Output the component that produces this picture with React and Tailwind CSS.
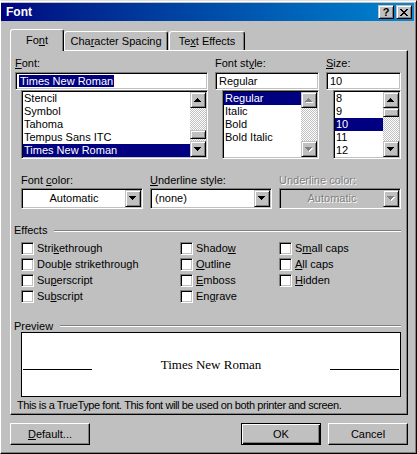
import React from "react";

const raised =
  "border border-t-white border-l-white border-r-black border-b-black shadow-[inset_-1px_-1px_0_#808080]";
const raisedSmall =
  "border border-t-[#c0c0c0] border-l-[#c0c0c0] border-r-black border-b-black shadow-[inset_1px_1px_0_#fff,inset_-1px_-1px_0_#808080]";
const sunken =
  "border border-t-[#808080] border-l-[#808080] border-r-white border-b-white shadow-[inset_1px_1px_0_#000,inset_-1px_-1px_0_#c0c0c0]";
const dither =
  "bg-[image:repeating-conic-gradient(#c0c0c0_0_25%,#fff_0_50%)] bg-[length:2px_2px]";

function Arrow({ dir, disabled }) {
  const rows = dir === "up" ? [[3, 1], [2, 3], [1, 5], [0, 7]] : [[0, 7], [1, 5], [2, 3], [3, 1]];
  return (
    <svg width="8" height="5" viewBox="0 0 8 5" shapeRendering="crispEdges">
      {disabled &&
        rows.map(([x, w], i) => <rect key={"s" + i} x={x + 1} y={i + 1} width={w} height="1" fill="#fff" />)}
      {rows.map(([x, w], i) => (
        <rect key={i} x={x} y={i} width={w} height="1" fill={disabled ? "#808080" : "#000"} />
      ))}
    </svg>
  );
}

function ScrollBtn({ dir, disabled, className = "h-[16px]" }) {
  return (
    <div className={`${raisedSmall} ${className} w-[16px] shrink-0 bg-[#c0c0c0] flex items-center justify-center`}>
      <Arrow dir={dir} disabled={disabled} />
    </div>
  );
}

function ScrollBar({ thumb, disabled }) {
  return (
    <div className="w-[16px] flex flex-col shrink-0">
      <ScrollBtn dir="up" disabled={disabled} />
      <div className={`flex-1 ${dither}`}>
        {thumb !== undefined && (
          <div className={`${raisedSmall} h-[9px] w-[16px] bg-[#c0c0c0]`} style={{ marginTop: thumb }} />
        )}
      </div>
      <ScrollBtn dir="down" disabled={disabled} />
    </div>
  );
}

function List({ items, sel, thumb, disabled, className }) {
  return (
    <div className={`${sunken} bg-white flex p-[1px] h-[69px] ${className}`}>
      <div className="flex-1 flex flex-col overflow-hidden">
        {items.map((it) => (
          <div
            key={it}
            className={`h-[13px] leading-[13px] pl-[1px] whitespace-nowrap ${it === sel ? "bg-[#000080] text-white" : ""}`}
          >
            {it}
          </div>
        ))}
      </div>
      <ScrollBar thumb={thumb} disabled={disabled} />
    </div>
  );
}

function Field({ children }) {
  return (
    <div className={`${sunken} bg-white h-[18px] flex items-center pl-[3px] whitespace-nowrap`}>{children}</div>
  );
}

function Combo({ text, left, disabled }) {
  return (
    <div className="w-[122px] flex flex-col">
      <div className={`h-[21px] ${sunken} ${disabled ? "bg-[#c0c0c0]" : "bg-white"} flex items-center p-[1px]`}>
        <span
          className={`flex-1 ${left ? "pl-[3px]" : "text-center"} ${
            disabled ? "text-[#808080] [text-shadow:1px_1px_0_#fff]" : ""
          }`}
        >
          {text}
        </span>
        <ScrollBtn dir="down" disabled={disabled} className="h-[17px]" />
      </div>
    </div>
  );
}

function Check({ children }) {
  return (
    <div className="h-[16px] flex items-start">
      <div className={`${sunken} bg-white w-[13px] h-[13px] shrink-0`} />
      <span className="ml-[3px] leading-[13px] whitespace-nowrap">{children}</span>
    </div>
  );
}

function GroupLabel({ children, className = "" }) {
  return (
    <div className={`flex items-center w-[387px] -ml-[1px] ${className}`}>
      <span>{children}</span>
      <div className="flex-1 ml-[7px] h-[2px] border-t border-t-[#808080] border-b border-b-white" />
    </div>
  );
}

function TitleBar() {
  return (
    <div className="h-[18px] shrink-0 bg-gradient-to-r from-[#000080] to-[#1084d0] flex items-center pl-[5px] pr-[2px]">
      <span className="flex-1 text-white font-bold text-[12px]">Font</span>
      <div className={`${raisedSmall} bg-[#c0c0c0] w-[16px] h-[14px] flex items-center justify-center font-bold text-[11px] leading-none`}>
        ?
      </div>
      <div className={`${raisedSmall} bg-[#c0c0c0] w-[16px] h-[14px] ml-[2px] flex items-center justify-center`}>
        <svg width="8" height="7" viewBox="0 0 8 7" shapeRendering="crispEdges">
          <path d="M0 0h2v1H0zM6 0h2v1H6zM1 1h2v1H1zM5 1h2v1H5zM2 2h4v1H2zM3 3h2v1H3zM2 4h4v1H2zM1 5h2v1H1zM5 5h2v1H5zM0 6h2v1H0zM6 6h2v1H6z" fill="#000" />
        </svg>
      </div>
    </div>
  );
}

function Tabs() {
  return (
    <div className="flex items-end h-[21px]">
      <div className="relative z-10 -mb-[1px] h-[22px] w-[54px] bg-[#c0c0c0] border-l border-t border-r border-l-white border-t-white border-r-black shadow-[inset_-1px_0_0_#808080] rounded-t-[3px] flex items-center justify-center pb-[1px]">
        Fo<u>n</u>t
      </div>
      <div className="h-[19px] w-[104px] border-l border-t border-r border-l-white border-t-white border-r-black shadow-[inset_-1px_0_0_#808080] rounded-t-[3px] flex items-center justify-center">
        Cha<u>r</u>acter Spacing
      </div>
      <div className="h-[19px] w-[76px] ml-[1px] border-l border-t border-r border-l-white border-t-white border-r-black shadow-[inset_-1px_0_0_#808080] rounded-t-[3px] flex items-center justify-center">
        Te<u>x</u>t Effects
      </div>
    </div>
  );
}

function Panel() {
  return (
    <div className={`w-[398px] h-[365px] ${raised} pt-[6px] pl-[4px] flex flex-col`}>
      <div className="flex">
        <div className="w-[193px] flex flex-col">
          <div className="h-[13px] mb-[2px]">
            <u>F</u>ont:
          </div>
          <Field>
            <span className="bg-[#000080] text-white px-[1px] leading-[12px]">Times New Roman</span>
          </Field>
          <List
            className="ml-[6px]"
            items={["Stencil", "Symbol", "Tahoma", "Tempus Sans ITC", "Times New Roman"]}
            sel="Times New Roman"
            thumb={22}
          />
        </div>
        <div className="w-[104px] ml-[7px] flex flex-col">
          <div className="h-[13px] mb-[2px]">
            Font st<u>y</u>le:
          </div>
          <Field>Regular</Field>
          <List className="ml-[7px]" items={["Regular", "Italic", "Bold", "Bold Italic"]} sel="Regular" disabled />
        </div>
        <div className="w-[75px] ml-[7px] flex flex-col">
          <div className="h-[13px] mb-[2px]">
            <u>S</u>ize:
          </div>
          <Field>10</Field>
          <List className="ml-[7px]" items={["8", "9", "10", "11", "12"]} sel="10" thumb={0} />
        </div>
      </div>

      <div className="flex gap-[7px] pl-[6px] mt-[15px]">
        <div className="flex flex-col">
          <div className="h-[13px] mb-[1px]">
            Font <u>c</u>olor:
          </div>
          <Combo text="Automatic" />
        </div>
        <div className="flex flex-col">
          <div className="h-[13px] mb-[1px]">
            <u>U</u>nderline style:
          </div>
          <Combo text="(none)" left />
        </div>
        <div className="flex flex-col">
          <div className="h-[13px] mb-[1px] text-[#808080] [text-shadow:1px_1px_0_#fff]">Underline color:</div>
          <Combo text="Automatic" disabled />
        </div>
      </div>

      <GroupLabel className="mt-[15px] h-[13px]">Effects</GroupLabel>
      <div className="flex pl-[6px] mt-[5px]">
        <div className="w-[159px] flex flex-col">
          <Check>
            Stri<u>k</u>ethrough
          </Check>
          <Check>
            Doub<u>l</u>e strikethrough
          </Check>
          <Check>
            Su<u>p</u>erscript
          </Check>
          <Check>
            Su<u>b</u>script
          </Check>
        </div>
        <div className="w-[99px] flex flex-col">
          <Check>
            Shado<u>w</u>
          </Check>
          <Check>
            <u>O</u>utline
          </Check>
          <Check>
            <u>E</u>mboss
          </Check>
          <Check>
            En<u>g</u>rave
          </Check>
        </div>
        <div className="flex flex-col">
          <Check>
            S<u>m</u>all caps
          </Check>
          <Check>
            <u>A</u>ll caps
          </Check>
          <Check>
            <u>H</u>idden
          </Check>
        </div>
      </div>

      <GroupLabel className="mt-[14px] h-[12px]">Preview</GroupLabel>
      <div className="ml-[6px] w-[380px] h-[65px] border border-black bg-white flex items-center px-[1px]">
        <div className="w-full h-[16px] flex justify-between items-start">
          <div className="w-[69px] h-px bg-black mt-[12px]" />
          <span className="font-['Liberation_Serif','Times_New_Roman',serif] text-[13px] leading-[16px]">
            Times New Roman
          </span>
          <div className="w-[69px] h-px bg-black mt-[12px]" />
        </div>
      </div>
      <div className="mt-[2px] pl-[2px] whitespace-nowrap tracking-[-0.4px]">
        This is a TrueType font. This font will be used on both printer and screen.
      </div>
    </div>
  );
}

function Buttons() {
  return (
    <div className="mt-[8px] w-[398px] flex justify-between">
      <div className={`${raised} w-[80px] h-[22px] flex items-center justify-center`}>
        <span>
          <u>D</u>efault...
        </span>
      </div>
      <div className="flex gap-[7px]">
        <div className="w-[80px] h-[22px] border border-black shadow-[inset_1px_1px_0_#fff,inset_-1px_-1px_0_#000,inset_-2px_-2px_0_#808080] flex items-center justify-center">
          OK
        </div>
        <div className={`${raised} w-[80px] h-[22px] flex items-center justify-center`}>Cancel</div>
      </div>
    </div>
  );
}

export default function App() {
  return (
    <div className="w-[417px] h-[454px] overflow-hidden bg-[#c0c0c0] font-['Liberation_Sans',Arial,sans-serif] text-[11px] leading-[13px] text-black border-t border-r border-b border-l border-t-[#dfdfdf] border-l-white border-r-black border-b-black shadow-[inset_0_1px_0_#fff,inset_-1px_-1px_0_#808080] pt-[2px] pr-[2px] pb-[2px] flex flex-col select-none">
      <TitleBar />
      <div className="pl-[9px] mt-[8px] flex flex-col">
        <Tabs />
        <Panel />
        <Buttons />
      </div>
    </div>
  );
}
